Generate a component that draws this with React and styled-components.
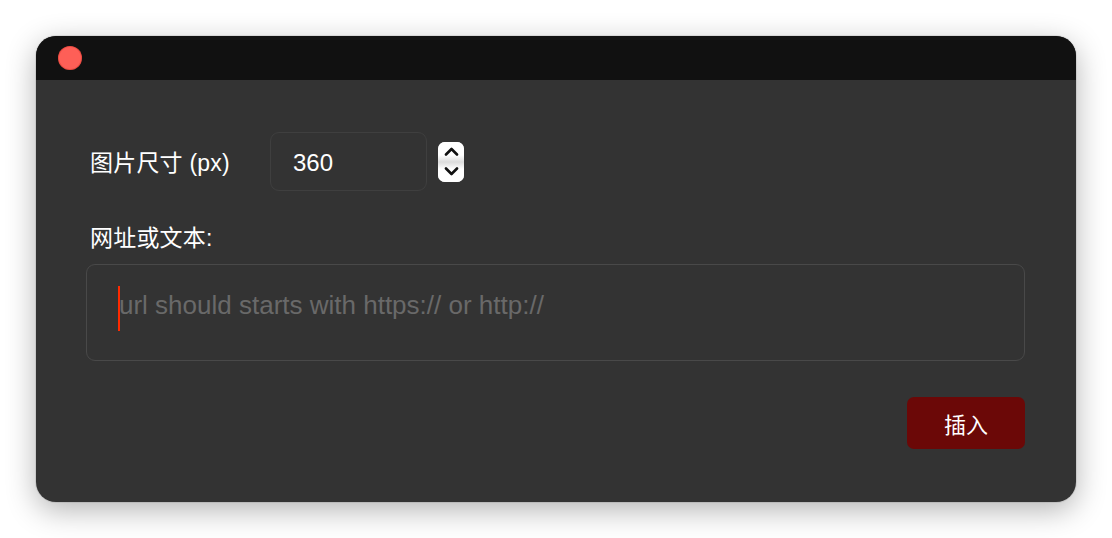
import React, { useState } from 'react';
import styled, { createGlobalStyle } from 'styled-components';

const GlobalStyle = createGlobalStyle`
    html, body {
        margin: 0;
        padding: 0;
        background: #ffffff;
    }
    body {
        font-family: "Liberation Sans", "Noto Sans CJK SC", sans-serif;
    }
`;

const Page = styled.div`
    width: 1112px;
    height: 538px;
    padding: 36px;
    box-sizing: border-box;
`;

const Window = styled.div`
    width: 1040px;
    height: 466px;
    border-radius: 20px;
    overflow: hidden;
    background: #333333;
    box-shadow: 0 8px 30px rgba(0, 0, 0, 0.3), 0 0 0 1px rgba(0, 0, 0, 0.08);
    display: flex;
    flex-direction: column;
`;

const TitleBar = styled.div`
    height: 44px;
    flex: none;
    background: #111111;
    display: flex;
    align-items: center;
    padding-left: 22px;
`;

const CloseDot = styled.div`
    width: 24px;
    height: 24px;
    border-radius: 50%;
    background: #fe5f57;
    box-shadow: inset 0 0 0 1px rgba(200, 40, 30, 0.35);
`;

const Body = styled.div`
    flex: 1;
    display: flex;
    flex-direction: column;
    padding: 52px 51px 53px 50px;
    color: #ffffff;
`;

const SizeRow = styled.div`
    display: flex;
    align-items: center;
    height: 59px;
`;

const Label = styled.div`
    font-size: 23px;
    line-height: 30px;
    color: #ffffff;
    padding: ${(p) => p.pad || '0'} 0 0 4px;
    width: ${(p) => p.width || 'auto'};
    box-sizing: border-box;
    letter-spacing: 0.2px;
`;

const NumberBox = styled.input`
    width: 157px;
    height: 59px;
    box-sizing: border-box;
    background: #333333;
    border: 1px solid #3f3f3f;
    border-radius: 9px;
    color: #ffffff;
    font-family: "Liberation Sans", "Noto Sans CJK SC", sans-serif;
    font-size: 24px;
    padding: 3px 0 0 22px;
    outline: none;
`;

const Spinner = styled.div`
    margin-left: 11px;
    width: 26px;
    height: 40px;
    background: #ffffff;
    border-radius: 7px;
    display: flex;
    flex-direction: column;
    overflow: hidden;
`;

const SpinHalf = styled.div`
    flex: 1;
    display: flex;
    align-items: center;
    justify-content: center;
    background: ${(p) => (p.top ? 'linear-gradient(#ffffff 65%, #dcdcdc)' : 'linear-gradient(#dcdcdc, #ffffff 35%)')};
`;

const UrlLabel = styled(Label)`
    margin-top: 32px;
`;

const TextBox = styled.div`
    margin-top: 11px;
    height: 97px;
    box-sizing: border-box;
    border: 1px solid #494949;
    border-radius: 9px;
    padding: 21px 0 0 31px;
    display: flex;
    align-items: flex-start;
`;

const Caret = styled.span`
    width: 2px;
    height: 45px;
    background: #ff2a00;
    flex: none;
`;

const Placeholder = styled.span`
    font-size: 26px;
    color: #696969;
    line-height: 38px;
    margin-left: -1px;
`;

const Footer = styled.div`
    margin-top: auto;
    display: flex;
    justify-content: flex-end;
`;

const InsertButton = styled.button`
    width: 118px;
    height: 52px;
    border: none;
    border-radius: 7px;
    background: #6b0807;
    color: #ffffff;
    font-family: "Liberation Sans", "Noto Sans CJK SC", sans-serif;
    font-size: 22px;
    cursor: pointer;
`;

const Chevron = ({ up }) => (
    <svg width="15" height="9" viewBox="0 0 15 9">
        <path
            d={up ? 'M2 7.5 L7.5 2 L13 7.5' : 'M2 1.5 L7.5 7 L13 1.5'}
            fill="none"
            stroke="#111"
            strokeWidth="2.6"
            strokeLinecap="round"
            strokeLinejoin="round"
        />
    </svg>
);

const App = () => {
    const [size, setSize] = useState('360');

    return (
        <Page>
            <GlobalStyle />
            <Window>
                <TitleBar>
                    <CloseDot />
                </TitleBar>
                <Body>
                    <SizeRow>
                        <Label width="184px" pad="3px">图片尺寸 (px)</Label>
                        <NumberBox value={size} onChange={(e) => setSize(e.target.value)} />
                        <Spinner>
                            <SpinHalf top>
                                <Chevron up />
                            </SpinHalf>
                            <SpinHalf>
                                <Chevron />
                            </SpinHalf>
                        </Spinner>
                    </SizeRow>
                    <UrlLabel>网址或文本:</UrlLabel>
                    <TextBox>
                        <Caret />
                        <Placeholder>url should starts with https:// or http://</Placeholder>
                    </TextBox>
                    <Footer>
                        <InsertButton>插入</InsertButton>
                    </Footer>
                </Body>
            </Window>
        </Page>
    );
};

export default App;
